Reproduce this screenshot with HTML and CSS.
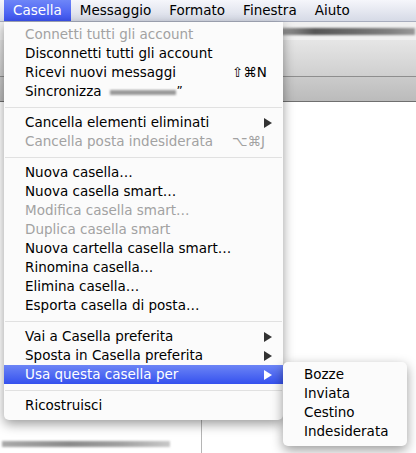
FILE: index.html
```html
<!DOCTYPE html>
<html lang="it">
<head>
<meta charset="utf-8">
<title>Casella</title>
<link rel="stylesheet" href="styles.css">
</head>
<body>
<div class="screen">
  <div class="menubar">
    <span class="mb-item active">Casella</span>
    <span class="mb-item">Messaggio</span>
    <span class="mb-item">Formato</span>
    <span class="mb-item">Finestra</span>
    <span class="mb-item">Aiuto</span>
  </div>
  <div class="desktop">
    <div class="win-title"><span class="smudge smudge-top"></span></div>
    <div class="win-toolbar"></div>
    <div class="win-band"></div>
    <div class="win-content">
      <div class="pane-left"><span class="smudge smudge-bottom"></span></div>
      <div class="pane-right"></div>
    </div>

    <div class="menu">
      <div class="row dis">Connetti tutti gli account</div>
      <div class="row">Disconnetti tutti gli account</div>
      <div class="row">Ricevi nuovi messaggi<span class="sc">⇧⌘N</span></div>
      <div class="row">Sincronizza<span class="smudge smudge-inline"></span><span class="quote">”</span></div>
      <div class="sep"></div>
      <div class="row">Cancella elementi eliminati<svg class="arrow" viewBox="0 0 8 10"><path d="M0 0L8 5L0 10Z"/></svg></div>
      <div class="row dis">Cancella posta indesiderata<span class="sc">⌥⌘J</span></div>
      <div class="sep"></div>
      <div class="row">Nuova casella…</div>
      <div class="row">Nuova casella smart…</div>
      <div class="row dis">Modifica casella smart…</div>
      <div class="row dis">Duplica casella smart</div>
      <div class="row">Nuova cartella casella smart…</div>
      <div class="row">Rinomina casella…</div>
      <div class="row">Elimina casella…</div>
      <div class="row">Esporta casella di posta…</div>
      <div class="sep"></div>
      <div class="row">Vai a Casella preferita<svg class="arrow" viewBox="0 0 8 10"><path d="M0 0L8 5L0 10Z"/></svg></div>
      <div class="row">Sposta in Casella preferita<svg class="arrow" viewBox="0 0 8 10"><path d="M0 0L8 5L0 10Z"/></svg></div>
      <div class="row hl">Usa questa casella per<svg class="arrow" viewBox="0 0 8 10"><path d="M0 0L8 5L0 10Z"/></svg>
        <div class="submenu">
          <div class="row">Bozze</div>
          <div class="row">Inviata</div>
          <div class="row">Cestino</div>
          <div class="row">Indesiderata</div>
        </div>
      </div>
      <div class="sep"></div>
      <div class="row">Ricostruisci</div>
    </div>
  </div>
</div>
</body>
</html>
```
FILE: styles.css
```css
* { box-sizing: border-box; }
html, body { margin: 0; padding: 0; }
body {
  width: 416px;
  height: 453px;
  overflow: hidden;
  background: #fff;
  font-family: "DejaVu Sans", "Liberation Sans", sans-serif;
  font-size: 13.5px;
  color: #000;
}
.screen {
  height: 453px;
  display: flex;
  flex-direction: column;
}
.menubar {
  height: 22px;
  flex: none;
  display: flex;
  padding-left: 4px;
  background: linear-gradient(#f5f6fb, #d6dae6);
  border-bottom: 1px solid #a8adbd;
  line-height: 22px;
}
.mb-item {
  padding: 0 9px;
  height: 21px;
  line-height: 21px;
}
.mb-item.active {
  background: linear-gradient(#6e86f8, #3b52ef);
  color: #fff;
}
.desktop {
  flex: 1;
  position: relative;
  display: flex;
  flex-direction: column;
}
.win-title {
  height: 18px;
  flex: none;
  background: #f0f0f0;
  padding: 6px 0 0 281px;
}
.win-toolbar {
  height: 37px;
  flex: none;
  background: linear-gradient(#e6e6e6, #cfcfcf);
  border-bottom: 1px solid #8e8e8e;
}
.win-band {
  height: 25px;
  flex: none;
  background: linear-gradient(#cbcbcb, #bbbbbb);
  border-bottom: 1px solid #6f6f6f;
}
.win-content {
  flex: 1;
  display: flex;
}
.pane-left {
  width: 202px;
  border-right: 1px solid #b5b5b5;
  display: flex;
  flex-direction: column;
  justify-content: flex-end;
  padding: 0 0 6px 2px;
}
.pane-right { flex: 1; background: #fff; }
.smudge {
  display: block;
  filter: blur(1.2px);
}
.smudge-top {
  width: 134px;
  height: 7px;
  background: linear-gradient(90deg, #9a9a9a, #555 25%, #6a6a6a 55%, #7e7e7e 80%, #999);
}
.smudge-bottom {
  width: 168px;
  height: 6px;
  background: linear-gradient(90deg, #aaa, #8a8a8a 40%, #a0a0a0 70%, #c8c8c8);
}
.smudge-inline {
  display: inline-block;
  width: 66px;
  height: 5px;
  margin-left: 8px;
  margin-top: 2px;
  background: #9a9a9a;
}
.quote { margin-left: 1px; font-size: 12px; }

.menu {
  position: absolute;
  left: 4px;
  top: 0;
  width: 279px;
  padding: 3px 0 5px;
  background: #fbfbfb;
  border-radius: 0 0 5px 5px;
  box-shadow: 0 4px 12px rgba(0, 0, 0, 0.4);
}
.row {
  position: relative;
  height: 19px;
  line-height: 19px;
  display: flex;
  align-items: center;
  padding: 0 11px 0 21px;
  white-space: nowrap;
}
.row.dis { color: #a2a2a2; }
.row.hl {
  background: linear-gradient(#6c85f6, #3551ee);
  color: #fff;
}
.sep {
  height: 12px;
  display: flex;
  align-items: center;
}
.sep::before {
  content: "";
  flex: 1;
  height: 1px;
  margin: 0 1px;
  background: #e1e1e1;
}
.sc {
  margin-left: auto;
  width: 38px;
  margin-right: 2px;
}
.arrow {
  margin-left: auto;
  width: 8px;
  height: 10px;
  fill: #333;
}
.row.hl .arrow { fill: #fff; }
.submenu {
  position: absolute;
  left: 100%;
  top: -3px;
  width: 124px;
  padding: 3px 0 5px;
  background: #fbfbfb;
  border-radius: 5px;
  box-shadow: 0 4px 12px rgba(0, 0, 0, 0.4);
  color: #000;
}
```
